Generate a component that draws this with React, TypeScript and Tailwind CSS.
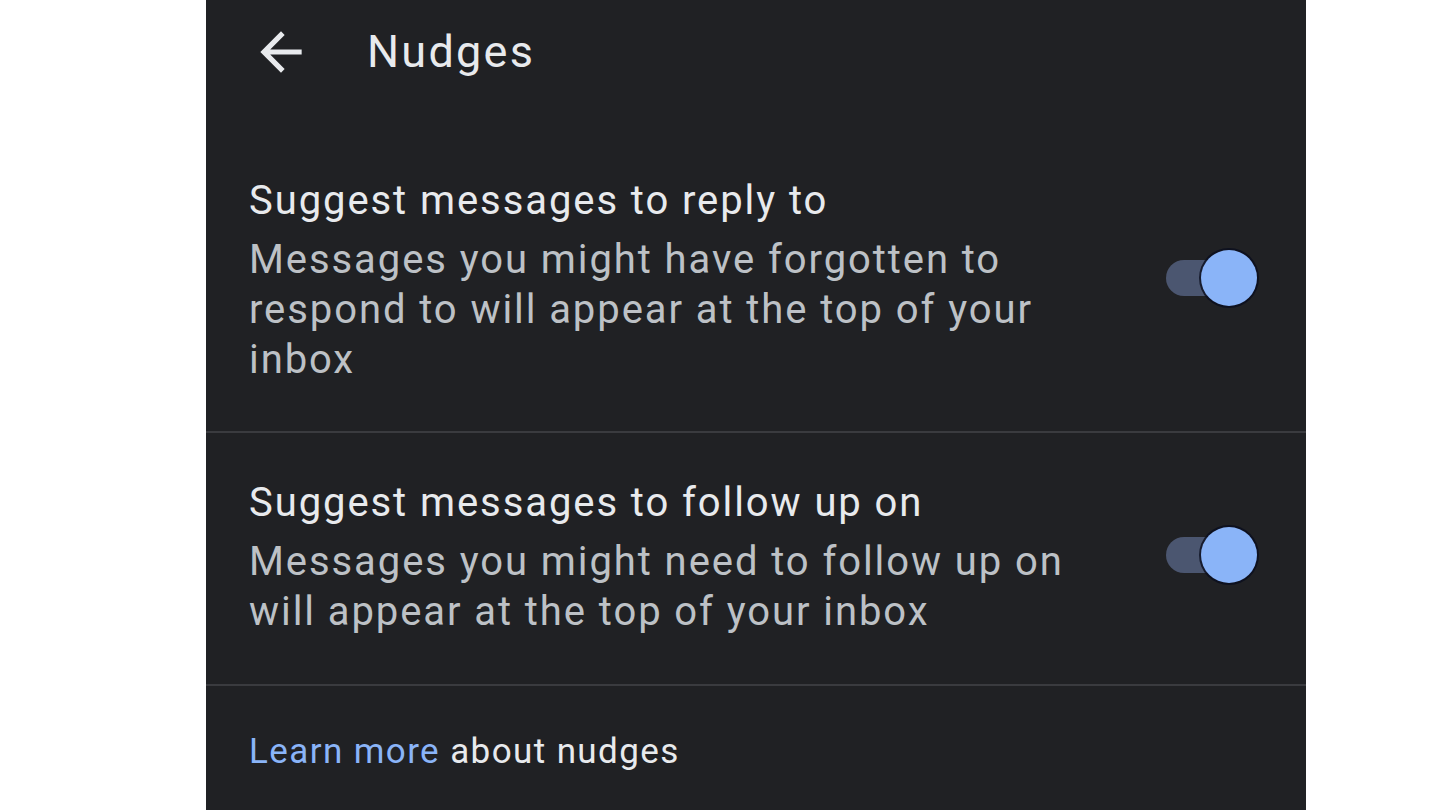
import React from 'react';

function BackArrow() {
  return (
    <svg width="62" height="62" viewBox="0 0 24 24" fill="#e8eaed">
      <path d="M20 11H7.83l5.59-5.59L12 4l-8 8 8 8 1.41-1.41L7.83 13H20v-2z" />
    </svg>
  );
}

function Toggle() {
  return (
    <div className="relative w-[91px] h-[58px] flex items-center shrink-0 -translate-y-[3px]">
      <div className="w-[88px] h-[36px] rounded-full bg-[#4b5670]" />
      <div className="absolute right-0 top-[1px] w-[56px] h-[56px] rounded-full bg-[#8ab4f8] shadow-[0_0_0_2px_rgba(10,14,30,0.8)]" />
    </div>
  );
}

function SettingRow({ title, desc, first }: { title: string; desc: string; first?: boolean }) {
  return (
    <div
      className={
        first
          ? 'flex items-center justify-between pl-[43px] pr-[49px] pt-[72px] pb-[46px] border-b-2 border-[#3a3b3f]'
          : 'flex items-center justify-between pl-[43px] pr-[49px] pt-[45px] pb-[47px] border-b-2 border-[#3a3b3f]'
      }
    >
      <div className="w-[840px]">
        <div className="text-[40px] leading-[50px] tracking-[0.048em] text-[#e8eaed]">{title}</div>
        <div className="mt-[9px] text-[40px] leading-[50px] tracking-[0.048em] text-[#bdc1c6]">{desc}</div>
      </div>
      <Toggle />
    </div>
  );
}

export default function App() {
  return (
    <div className="w-[1440px] h-[810px] bg-white overflow-hidden pl-[206px]" style={{ fontFamily: 'Roboto, "Noto Sans", sans-serif' }}>
      <div className="w-[1100px] h-full bg-[#202124]">
        {/* Top bar */}
        <div className="h-[104px] flex items-center pl-[44px]">
          <BackArrow />
          <span className="ml-[55px] text-[45px] tracking-[0.05em] text-[#e8eaed]">Nudges</span>
        </div>

        <SettingRow
          first
          title="Suggest messages to reply to"
          desc="Messages you might have forgotten to respond to will appear at the top of your inbox"
        />
        <SettingRow
          title="Suggest messages to follow up on"
          desc="Messages you might need to follow up on will appear at the top of your inbox"
        />

        <div className="pl-[43px] pt-[41px] text-[35px] leading-[50px] tracking-[0.04em]">
          <span className="text-[#8ab4f8]">Learn more</span>
          <span className="text-[#e8eaed]"> about nudges</span>
        </div>
      </div>
    </div>
  );
}
